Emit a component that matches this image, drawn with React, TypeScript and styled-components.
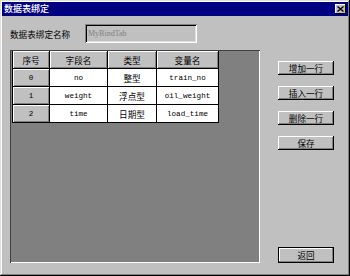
import React from "react";
import styled, { createGlobalStyle } from "styled-components";

const Global = createGlobalStyle`
  html, body { margin: 0; padding: 0; background: #c0c0c0; }
  * { box-sizing: border-box; }
`;

const CJK = `"Noto Sans CJK SC", "Noto Sans", sans-serif`;

const Window = styled.div`
  width: 350px;
  height: 276px;
  background: #c0c0c0;
  display: flex;
  flex-direction: column;
  box-shadow: inset -1px -1px 0 #000, inset 1px 1px 0 #dfdfdf, inset -2px -2px 0 #808080, inset 2px 2px 0 #fff;
  padding: 2px;
  font-family: ${CJK};
`;

const TitleBar = styled.div`
  height: 14px;
  background: #000080;
  display: flex;
  align-items: center;
  justify-content: space-between;
  padding: 0 2px 0 2px;
`;

const TitleText = styled.span`
  color: #fff;
  font-size: 9px;
  font-weight: 500;
  line-height: 14px;
`;

const CloseBtn = styled.div`
  width: 11px;
  height: 10px;
  background: #c0c0c0;
  box-shadow: inset -1px -1px 0 #000, inset 1px 1px 0 #fff;
  display: flex;
  align-items: center;
  justify-content: center;
`;

const Content = styled.div`
  flex: 1;
  display: flex;
  flex-direction: column;
  padding: 8px 0 0 8px;
`;

const NameRow = styled.div`
  display: flex;
  align-items: center;
  height: 19px;
`;

const Label = styled.span`
  font-size: 8.6px;
  color: #000;
  width: 75px;
`;

const NameInput = styled.div`
  width: 112px;
  height: 19px;
  background: #c0c0c0;
  box-shadow: inset 1px 1px 0 #808080, inset -1px -1px 0 #fff, inset 2px 2px 0 #000, inset -2px -2px 0 #dfdfdf;
  font-family: "Liberation Serif", serif;
  font-size: 8px;
  color: #808080;
  padding: 0 3px;
  display: flex;
  align-items: center;
`;

const Main = styled.div`
  display: flex;
  margin-top: 7px;
  flex: 1;
  padding-bottom: 11px;
`;

const GridBox = styled.div`
  width: 250px;
  height: 213px;
  background: #808080;
  box-shadow: inset 1px 1px 0 #404040, inset -1px -1px 0 #fff;
  padding: 1px 0 0 2px;
`;

const Table = styled.div`
  display: grid;
  grid-template-columns: 36px 57px 48px 61px;
  grid-auto-rows: 17px;
  width: 207px;
  background: #000;
  gap: 1px;
  padding: 0 1px 1px 0;
  border-left: 1px solid #000;
`;

const Cell = styled.div<{ $head?: boolean; $mono?: boolean }>`
  background: ${(p) => (p.$head ? "#c0c0c0" : "#fff")};
  box-shadow: ${(p) => (p.$head ? "inset 1px 1px 0 #fff, inset -1px -1px 0 #808080" : "none")};
  display: flex;
  align-items: center;
  justify-content: center;
  font-family: ${(p) => (p.$mono ? `"Liberation Mono", monospace` : CJK)};
  font-size: ${(p) => (p.$mono ? "7.6px" : "8.6px")};
  font-weight: 400;
  color: #000;
`;

const Buttons = styled.div`
  display: flex;
  flex-direction: column;
  margin-left: 18px;
  padding-top: 11px;
`;

const Btn = styled.div<{ $gap?: number }>`
  width: 56px;
  height: 14px;
  margin-bottom: ${(p) => p.$gap ?? 11}px;
  background: #c0c0c0;
  box-shadow: inset -1px -1px 0 #000, inset 1px 1px 0 #fff, inset -2px -2px 0 #808080;
  display: flex;
  align-items: center;
  justify-content: center;
  font-size: 8.6px;
  color: #000;
`;

const DefaultBtn = styled(Btn)`
  margin-top: auto;
  margin-bottom: 0;
  height: 16px;
  box-shadow: inset 0 0 0 1px #000, inset -2px -2px 0 #808080, inset 2px 2px 0 #fff;
`;

const rows = [
  ["0", "no", "整型", "train_no"],
  ["1", "weight", "浮点型", "oil_weight"],
  ["2", "time", "日期型", "load_time"],
];

export default function App() {
  return (
    <>
      <Global />
      <Window>
        <TitleBar>
          <TitleText>数据表绑定</TitleText>
          <CloseBtn>
            <svg width="7" height="6" viewBox="0 0 7 6">
              <path d="M0.5 0.5 L6.5 5.5 M6.5 0.5 L0.5 5.5" stroke="#000" strokeWidth="1.4" />
            </svg>
          </CloseBtn>
        </TitleBar>
        <Content>
          <NameRow>
            <Label>数据表绑定名称</Label>
            <NameInput>MyBindTab</NameInput>
          </NameRow>
          <Main>
            <GridBox>
              <Table>
                <Cell $head>序号</Cell>
                <Cell $head>字段名</Cell>
                <Cell $head>类型</Cell>
                <Cell $head>变量名</Cell>
                {rows.map((r) => (
                  <React.Fragment key={r[0]}>
                    <Cell $head $mono>{r[0]}</Cell>
                    <Cell $mono>{r[1]}</Cell>
                    <Cell>{r[2]}</Cell>
                    <Cell $mono>{r[3]}</Cell>
                  </React.Fragment>
                ))}
              </Table>
            </GridBox>
            <Buttons>
              <Btn>增加一行</Btn>
              <Btn>插入一行</Btn>
              <Btn>删除一行</Btn>
              <Btn $gap={0}>保存</Btn>
              <DefaultBtn>返回</DefaultBtn>
            </Buttons>
          </Main>
        </Content>
      </Window>
    </>
  );
}
